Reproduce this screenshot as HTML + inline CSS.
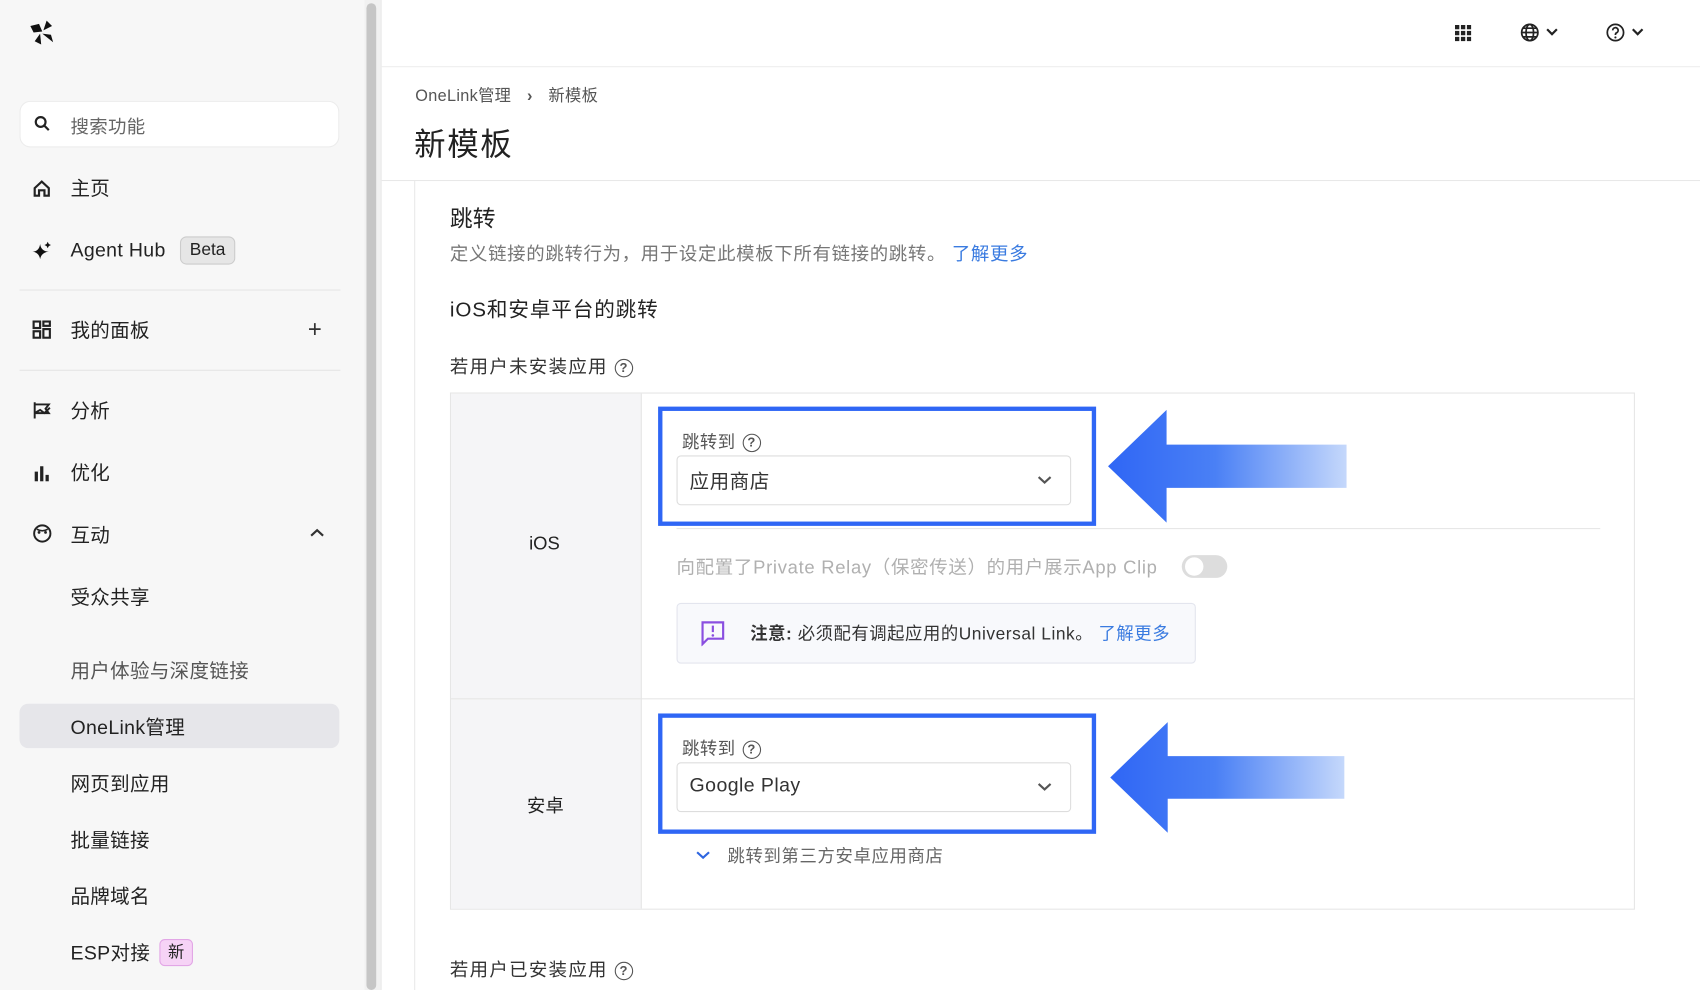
<!DOCTYPE html>
<html><head><meta charset="utf-8"><style>
*{box-sizing:border-box;margin:0;padding:0}
body{width:1700px;height:990px;overflow:hidden;background:#fff;font-family:"Liberation Sans","Noto Sans CJK SC",sans-serif;color:#222}
#w{position:absolute;left:0;top:0;width:1568px;height:913px;transform:scale(1.08418,1.0843);transform-origin:0 0}
.a{position:absolute;white-space:nowrap}
.side{position:absolute;left:0;top:0;width:336px;height:913px;background:#f7f7f7}
.nav{position:absolute;left:65px;font-size:18px;color:#222;transform:translateY(-50%);letter-spacing:0.3px}
.ic{position:absolute;left:30px;transform:translateY(-50%)}
.hr{position:absolute;left:18px;width:296px;height:1px;background:#e6e6e6}
.q{display:inline-block;width:17px;height:17px;border:1.5px solid #555;border-radius:50%;font-size:12px;line-height:14px;text-align:center;color:#555;vertical-align:middle;margin-left:6px;font-weight:bold;letter-spacing:0}
.bb{position:absolute;border:4px solid #2f66f5}
.sel{position:absolute;border:1px solid #ddd;border-radius:4px;background:#fff}
</style></head><body><div id="w">
<div class="side">
<svg class="a" style="left:26px;top:17px" width="26" height="26" viewBox="0 0 26 26"><path d="M2 7 L10 5 L13 12 L5 13Z M14 11 L17 2 L22 7Z M13 14 L21 15 L23 22 Z M11 14 L6 21 L12 24Z" fill="#111"/></svg>
<div class="a" style="left:18px;top:93px;width:295px;height:43px;background:#fff;border:1px solid #ececec;border-radius:10px"></div>
<svg class="a" style="left:31px;top:106px" width="16" height="16" viewBox="0 0 16 16"><circle cx="6.5" cy="6.5" r="4.5" fill="none" stroke="#222" stroke-width="2"/><path d="M10 10l4 4" stroke="#222" stroke-width="2"/></svg>
<div class="nav" style="top:115px;color:#666;font-size:17px">搜索功能</div>
<svg class="ic" style="top:174px" width="17" height="17" viewBox="0 0 17 17"><path d="M2 8L8.5 2 15 8V15H11V10H6V15H2Z" fill="none" stroke="#222" stroke-width="2"/></svg>
<div class="nav" style="top:173px">主页</div>
<svg class="ic" style="top:231px" width="18" height="18" viewBox="0 0 18 18"><path d="M7 3Q8 10 15 10 8 11 7 17 6 11 0 10 6 10 7 3Z" fill="#111"/><path d="M14 1l1 2 2 1-2 1-1 2-1-2-2-1 2-1z" fill="#111"/></svg>
<div class="nav" style="top:231px">Agent Hub</div>
<div class="a" style="left:166px;top:218px;width:51px;height:26px;background:#e6e6e6;border:1px solid #ccc;border-radius:6px;font-size:16px;text-align:center;line-height:24px">Beta</div>
<div class="hr" style="top:267px"></div>
<svg class="ic" style="top:304px" width="17" height="17" viewBox="0 0 17 17"><g fill="none" stroke="#222" stroke-width="2"><rect x="1" y="1" width="6" height="6"/><rect x="10" y="1" width="6" height="4"/><rect x="1" y="10" width="6" height="6"/><rect x="10" y="8" width="6" height="8"/></g></svg>
<div class="nav" style="top:304px">我的面板</div>
<div class="a" style="left:284px;top:291px;font-size:22px;color:#333">+</div>
<div class="hr" style="top:341px"></div>
<svg class="ic" style="top:378px" width="18" height="18" viewBox="0 0 18 18"><path d="M2 17V2M2 4h13l-3 4 3 4H2M2 12l5-3 4 3 5-5" fill="none" stroke="#222" stroke-width="1.8"/></svg>
<div class="nav" style="top:378px">分析</div>
<svg class="ic" style="top:436px" width="16" height="16" viewBox="0 0 16 16"><path d="M2 16V7h3v9zM7 16V2h3v14zM12 16v-6h3v6z" fill="#222"/></svg>
<div class="nav" style="top:435px">优化</div>
<svg class="ic" style="top:492px" width="18" height="18" viewBox="0 0 18 18"><circle cx="9" cy="9" r="7.5" fill="none" stroke="#222" stroke-width="1.8"/><circle cx="6" cy="8" r="1.3" fill="#222"/><circle cx="12" cy="8" r="1.3" fill="#222"/><path d="M4 5q5 3 10 0" fill="none" stroke="#222" stroke-width="1.5"/></svg>
<div class="nav" style="top:493px">互动</div>
<svg class="a" style="left:286px;top:487px" width="13" height="9" viewBox="0 0 13 9"><path d="M1 7l5.5-5 5.5 5" fill="none" stroke="#333" stroke-width="2"/></svg>
<div class="nav" style="top:550px">受众共享</div>
<div class="nav" style="top:618px;color:#555">用户体验与深度链接</div>
<div class="a" style="left:18px;top:649px;width:295px;height:41px;background:#e6e6ea;border-radius:8px"></div>
<div class="nav" style="top:670px">OneLink管理</div>
<div class="nav" style="top:722px">网页到应用</div>
<div class="nav" style="top:774px">批量链接</div>
<div class="nav" style="top:826px">品牌域名</div>
<div class="nav" style="top:878px">ESP对接</div>
<div class="a" style="left:147px;top:866px;width:31px;height:25px;background:#f6d3f6;border:1px solid #e2a6e6;border-radius:5px;font-size:15px;text-align:center;line-height:23px">新</div>
</div>
<div class="a" style="left:336px;top:0;width:15px;height:913px;background:#f1f1f1"></div>
<div class="a" style="left:338px;top:3px;width:9px;height:910px;background:#c6c6c6;border-radius:5px"></div>
<div class="a" style="left:351px;top:0;width:1px;height:913px;background:#e8e8e8"></div>
<div class="a" style="left:352px;top:61px;width:1216px;height:1px;background:#eee"></div>
<svg class="a" style="left:1342px;top:23px" width="15" height="15" viewBox="0 0 15 15"><g fill="#222"><rect x="0" y="0" width="4" height="4"/><rect x="5.5" y="0" width="4" height="4"/><rect x="11" y="0" width="4" height="4"/><rect x="0" y="5.5" width="4" height="4"/><rect x="5.5" y="5.5" width="4" height="4"/><rect x="11" y="5.5" width="4" height="4"/><rect x="0" y="11" width="4" height="4"/><rect x="5.5" y="11" width="4" height="4"/><rect x="11" y="11" width="4" height="4"/></g></svg>
<svg class="a" style="left:1402px;top:21px" width="38" height="18" viewBox="0 0 38 18"><g fill="none" stroke="#222" stroke-width="1.6"><circle cx="9" cy="9" r="7.5"/><ellipse cx="9" cy="9" rx="3.5" ry="7.5"/><path d="M1.5 9h15M3 5h12M3 13h12"/><path d="M25 6l4.5 4.5L34 6" stroke-width="2"/></g></svg>
<svg class="a" style="left:1481px;top:21px" width="38" height="18" viewBox="0 0 38 18"><g fill="none" stroke="#222" stroke-width="1.6"><circle cx="9" cy="9" r="7.5"/><path d="M6.5 7a2.5 2.5 0 1 1 3.5 2.3c-1 .4-1 1-1 2"/><path d="M25 6l4.5 4.5L34 6" stroke-width="2"/></g><circle cx="9" cy="13.5" r="1" fill="#222"/></svg>
<div class="a" style="left:383px;top:77px;font-size:15px;color:#555;letter-spacing:0.3px">OneLink管理 <span style="margin:0 10px;font-weight:bold">›</span> 新模板</div>
<div class="a" style="left:382px;top:110px;font-size:29px;color:#222;letter-spacing:1.5px">新模板</div>
<div class="a" style="left:352px;top:166px;width:1216px;height:1px;background:#e8e8e8"></div>
<div class="a" style="left:382px;top:167px;width:1px;height:746px;background:#e8e8e8"></div>
<div class="a" style="left:415px;top:186px;font-size:21px">跳转</div>
<div class="a" style="left:415px;top:220px;font-size:17px;color:#777;letter-spacing:0.6px">定义链接的跳转行为，用于设定此模板下所有链接的跳转。 <span style="color:#3a7be0">了解更多</span></div>
<div class="a" style="left:415px;top:271px;font-size:19px;color:#222;letter-spacing:0.8px">iOS和安卓平台的跳转</div>
<div class="a" style="left:415px;top:324px;font-size:17px;color:#333;letter-spacing:1.2px">若用户未安装应用<span class="q">?</span></div>
<div class="a" style="left:415px;top:362px;width:1093px;height:477px;border:1px solid #e6e6e6"></div>
<div class="a" style="left:416px;top:363px;width:176px;height:475px;background:#f5f5f7;border-right:1px solid #e6e6e6"></div>
<div class="a" style="left:416px;top:644px;width:1091px;height:1px;background:#e6e6e6"></div>
<div class="a" style="left:488px;top:492px;font-size:17px">iOS</div>
<div class="a" style="left:486px;top:729px;font-size:17px">安卓</div>
<div class="a" style="left:624px;top:487px;width:852px;height:1px;background:#e6e6e6"></div>
<div class="bb" style="left:607px;top:375px;width:404px;height:110px"></div>
<div class="a" style="left:629px;top:394px;font-size:16px;color:#555;letter-spacing:0.5px">跳转到<span class="q">?</span></div>
<div class="sel" style="left:624px;top:420px;width:364px;height:46px"></div>
<div class="a" style="left:636px;top:430px;font-size:18px;color:#333;letter-spacing:0.5px">应用商店</div>
<svg class="a" style="left:957px;top:438px" width="13" height="9" viewBox="0 0 13 9"><path d="M1 2l5.5 5 5.5-5" fill="none" stroke="#555" stroke-width="2"/></svg>
<div class="a" style="left:624px;top:509px;font-size:17px;color:#b0b0b0;letter-spacing:0.65px">向配置了Private Relay（保密传送）的用户展示App Clip</div>
<div class="a" style="left:1090px;top:512px;width:42px;height:21px;background:#ddd;border-radius:11px"></div>
<div class="a" style="left:1093px;top:514px;width:17px;height:17px;background:#fff;border-radius:50%"></div>
<div class="a" style="left:624px;top:556px;width:479px;height:56px;background:#f8f9fc;border:1px solid #e3e5ee;border-radius:4px"></div>
<svg class="a" style="left:646px;top:572px" width="23" height="24" viewBox="0 0 23 24"><path d="M2 2h19v15H7l-5 5z" fill="none" stroke="#8a4fe0" stroke-width="2"/><path d="M11.5 5v6" stroke="#8a4fe0" stroke-width="2"/><circle cx="11.5" cy="14" r="1.2" fill="#8a4fe0"/></svg>
<div class="a" style="left:692px;top:571px;font-size:16px;color:#333;letter-spacing:0.5px"><b>注意:</b> 必须配有调起应用的Universal Link。 <span style="color:#3a7be0">了解更多</span></div>
<div class="bb" style="left:607px;top:658px;width:404px;height:111px"></div>
<div class="a" style="left:629px;top:677px;font-size:16px;color:#555;letter-spacing:0.5px">跳转到<span class="q">?</span></div>
<div class="sel" style="left:624px;top:703px;width:364px;height:46px"></div>
<div class="a" style="left:636px;top:714px;font-size:18px;color:#333;letter-spacing:0.4px">Google Play</div>
<svg class="a" style="left:957px;top:721px" width="13" height="9" viewBox="0 0 13 9"><path d="M1 2l5.5 5 5.5-5" fill="none" stroke="#555" stroke-width="2"/></svg>
<svg class="a" style="left:642px;top:784px" width="13" height="9" viewBox="0 0 13 9"><path d="M1 2l5.5 5 5.5-5" fill="none" stroke="#2f66e0" stroke-width="2"/></svg>
<div class="a" style="left:671px;top:776px;font-size:16px;color:#666;letter-spacing:0.6px">跳转到第三方安卓应用商店</div>
<svg class="a" style="left:1020px;top:376px" width="224" height="108" viewBox="0 0 224 108"><defs><linearGradient id="g" x1="0" x2="1"><stop offset="0" stop-color="#2f66f5"/><stop offset="0.45" stop-color="#4a80f5"/><stop offset="1" stop-color="#c5d8fb"/></linearGradient></defs><path d="M2 54L56 2V34H222V74H56V106Z" fill="url(#g)"/></svg>
<svg class="a" style="left:1020px;top:664px" width="224" height="106" viewBox="0 0 224 108"><path d="M2 54L56 2V34H222V74H56V106Z" fill="url(#g)"/></svg>
<div class="a" style="left:415px;top:880px;font-size:17px;color:#333;letter-spacing:1.2px">若用户已安装应用<span class="q">?</span></div>
</div></body></html>
